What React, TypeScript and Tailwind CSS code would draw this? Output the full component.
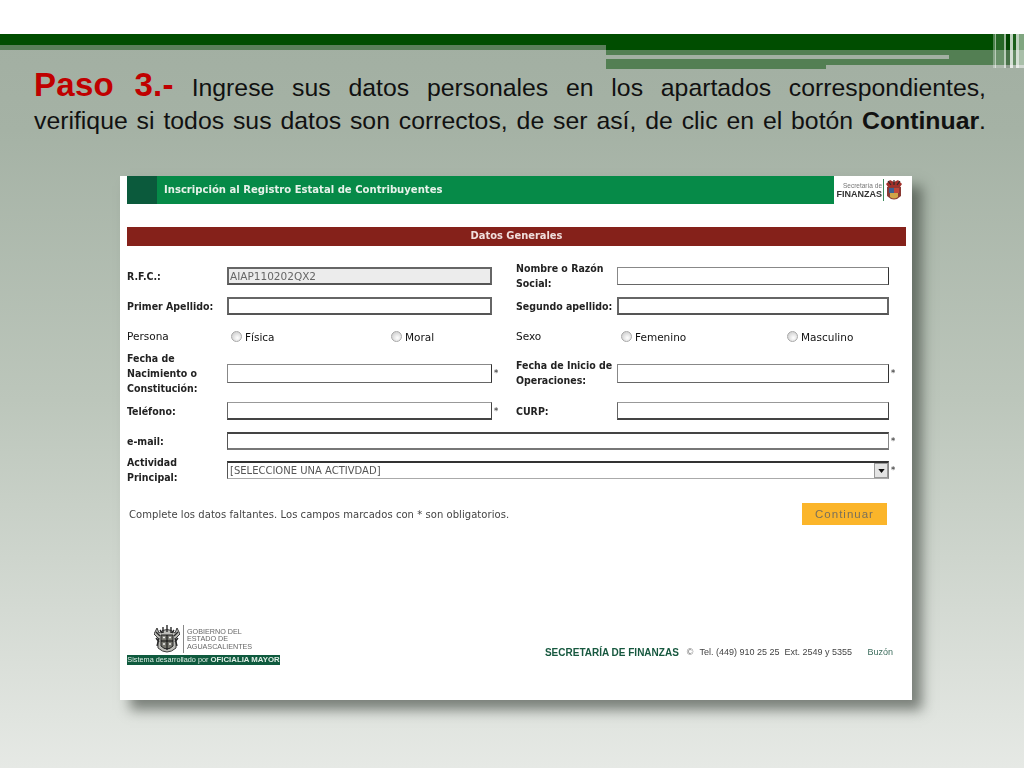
import React from "react";

const arial = { fontFamily: '"Liberation Sans", Arial, sans-serif' };
const dejavu = { fontFamily: '"DejaVu Sans", Verdana, sans-serif' };

function Coat({ className }: { className?: string }) {
  return (
    <svg viewBox="0 0 26 30" className={className}>
      <path d="M5 9 Q13 2 21 9 L23 4 L26 10 L22 14 L22 24 Q13 32 4 24 L4 14 L0 10 L3 4 Z" fill="#bdbdb8" stroke="#3a3a3a" strokeWidth="1" />
      <path d="M2 8 L6 12 M24 8 L20 12 M9 3 L9 9 M13 1 L13 8 M17 3 L17 9 M5 14 L3 22 M21 14 L23 22 M6 6 L8 9 M20 6 L18 9 M2 14 L5 18 M24 14 L21 18" stroke="#2a2a2a" strokeWidth="1.4" />
      <path d="M7 11 H19 V22 Q13 28 7 22 Z" fill="#77776f" stroke="#222" strokeWidth="1" />
      <path d="M13 11 V26 M7 17 H19" stroke="#111" strokeWidth="1" />
      <path d="M9 13.5 h2 M15 13.5 h2 M9 20 h2 M15 20 h2" stroke="#eee" strokeWidth="1.4" />
    </svg>
  );
}

function Crest() {
  return (
    <svg viewBox="0 0 18 22" className="h-[22px] w-[18px]">
      <path d="M1 5 L5 1 L9 3 L13 1 L17 5 L15 8 L3 8 Z" fill="#a1302a" />
      <path d="M3 2 L6 6 M15 2 L12 6 M9 1 V6" stroke="#2f2a2a" strokeWidth="1.2" />
      <path d="M2 8 H16 V17 Q9 24 2 17 Z" fill="#8a3a34" />
      <path d="M4 9 H9 V14 H4 Z" fill="#3a5f92" />
      <path d="M9 9 H14 V14 H9 Z" fill="#c0443a" />
      <path d="M5 14 H13 V18 Q9 21 5 18 Z" fill="#d0a548" />
    </svg>
  );
}

type Tone = "dark" | "light" | "mid" | "top";

function Field({ gray, tone = "dark", value, className }: { gray?: boolean; tone?: Tone; value?: string; className?: string }) {
  const border =
    tone === "light"
      ? "border border-t-[#888] border-l-[#888] border-r-[#333] border-b-[#666]"
      : tone === "mid"
        ? "border border-b-2 border-t-[#999] border-l-[#666] border-r-[#444] border-b-[#444]"
        : tone === "top"
          ? "border border-t-2 border-b-2 border-t-[#444] border-l-[#555] border-r-[#888] border-b-[#777]"
          : "border-2 border-t-[#666] border-l-[#666] border-r-[#666] border-b-[#555]";
  return (
    <div
      className={`flex items-center pl-[1px] text-[10.5px] font-normal text-[#666] ${border} ${gray ? "bg-[#ececec]" : "bg-white"} ${className ?? "h-[18px]"}`}
      style={dejavu}
    >
      {value}
    </div>
  );
}

function Radio({ label }: { label: string }) {
  return (
    <div className="flex items-center gap-[3px]">
      <span className="h-[11px] w-[11px] rounded-full border border-[#a8a8a8] bg-[radial-gradient(circle_at_60%_65%,#ffffff,#c4c4c4)]" />
      <span className="mt-[1px]">{label}</span>
    </div>
  );
}

function Star() {
  return <span className="pl-[2px] text-[9px] text-[#555]">*</span>;
}

export default function App() {
  return (
    <div className="h-[768px] w-[1024px] overflow-hidden bg-[linear-gradient(to_bottom,#ffffff_0px,#ffffff_34px,#a2afa2_34px,#a5b2a5_130px,#bcc6bb_400px,#e6e9e5_768px)]" style={arial}>
      {/* decorative header */}
      <div className="relative mt-[34px] flex h-[35px] w-[1024px]">
        <div className="w-[606px]">
          <div className="h-[11px] bg-[#004d00]" />
          <div className="h-[5px] bg-[#5a7f5a]" />
        </div>
        <div className="w-[418px]">
          <div className="h-[16px] bg-[#004d00]" />
          <div className="h-[15px] bg-[#537f53] pt-[5px]">
            <div className="h-[4px] w-[343px] bg-[#a3b0a3]" />
          </div>
          <div className="flex h-[4px]">
            <div className="h-full w-[220px] bg-[#537f53]" />
            <div className="h-[1px] w-[180px] bg-[#a3b0a3]" />
          </div>
        </div>
        <div className="absolute right-0 top-0 flex h-[34px] w-[31px]">
          <div className="w-[2px] bg-white/30" />
          <div className="w-[1px] bg-white/60" />
          <div className="w-[8px] bg-white/15" />
          <div className="w-[2px] bg-white/60" />
          <div className="w-[4px] bg-black/10" />
          <div className="w-[3px] bg-white/75" />
          <div className="w-[3px] bg-white/10" />
          <div className="w-[3px] bg-white/75" />
          <div className="w-[5px] bg-white/50" />
        </div>
      </div>

      {/* instruction text */}
      <div className="-mt-[1px] ml-[34px] w-[952px] text-[24.8px] text-[#111]">
        <div className="h-[36px] text-justify leading-[33px] [text-align-last:justify]">
          <span className="text-[33px] font-bold leading-[33px] tracking-[0.3px] text-[#c00000]">Paso 3.-</span>{" "}
          Ingrese sus datos personales en los apartados correspondientes,
        </div>
        <div className="h-[33px] text-justify leading-[33px] [text-align-last:justify]">
          verifique si todos sus datos son correctos, de ser así, de clic en el botón <b>Continuar</b>.
        </div>
      </div>

      {/* embedded page capture */}
      <div
        className="ml-[120px] mt-[39px] h-[524px] w-[792px] bg-white shadow-[10px_10px_12px_rgba(40,48,40,0.55)]"
        style={{ fontFamily: '"DejaVu Sans Condensed", "DejaVu Sans", Verdana, sans-serif' }}
      >
        <div className="flex h-full flex-col pl-[7px] pr-[6px] text-[10.5px] text-[#222] blur-[0.35px]">
          <div className="flex h-[28px]">
            <div className="w-[30px] bg-[#0b5a3c]" />
            <div className="flex flex-1 items-center bg-[#068a48] pl-[7px] text-[11.2px] font-bold text-[#e8f2ea]">
              Inscripción al Registro Estatal de Contribuyentes
            </div>
            <div className="flex w-[72px] items-center justify-end gap-[1px] pr-[3px]">
              <div className="text-right leading-[8px]">
                <div className="text-[6.5px] text-[#777]" style={arial}>Secretaría de</div>
                <div className="text-[9px] font-bold text-[#333]" style={arial}>FINANZAS</div>
              </div>
              <div className="h-[22px] w-[1px] bg-[#3c8a5c]" />
              <Crest />
            </div>
          </div>

          <div className="mt-[23px] flex h-[19px] items-center justify-center bg-[#85211a] text-[11px] font-bold text-[#f0dfdc]">
            Datos Generales
          </div>

          <div className="mt-[15px] grid grid-cols-[100px_265px_24px_101px_272px_1fr] grid-rows-[30px_30px_31px_42px_34px_26px_32px] items-center font-bold leading-[15px]">
            <div>R.F.C.:</div>
            <Field gray value="AIAP110202QX2" />
            <div />
            <div>Nombre o Razón Social:</div>
            <Field tone="light" />
            <div />

            <div>Primer Apellido:</div>
            <Field />
            <div />
            <div>Segundo apellido:</div>
            <Field />
            <div />

            <div className="font-normal text-[#111]" style={dejavu}>Persona</div>
            <div className="grid grid-cols-[160px_1fr] pl-[4px] font-normal text-[#111]" style={dejavu}>
              <Radio label="Física" />
              <Radio label="Moral" />
            </div>
            <div />
            <div className="font-normal text-[#111]" style={dejavu}>Sexo</div>
            <div className="grid grid-cols-[166px_1fr] pl-[4px] font-normal text-[#111]" style={dejavu}>
              <Radio label="Femenino" />
              <Radio label="Masculino" />
            </div>
            <div />

            <div>Fecha de Nacimiento o Constitución:</div>
            <Field tone="light" className="h-[19px]" />
            <Star />
            <div>Fecha de Inicio de Operaciones:</div>
            <Field tone="light" className="h-[19px]" />
            <Star />

            <div>Teléfono:</div>
            <Field tone="mid" />
            <Star />
            <div>CURP:</div>
            <Field tone="mid" />
            <div />

            <div>e-mail:</div>
            <div className="col-span-4">
              <Field tone="top" />
            </div>
            <Star />

            <div>Actividad Principal:</div>
            <div className="col-span-4 flex h-[18px] items-center justify-between border border-t-2 border-t-[#333] border-l-[#555] border-r-[#888] border-b-[#aaa] pl-[2px] font-normal text-[#555]">
              <span className="text-[10px]" style={dejavu}>[SELECCIONE UNA ACTIVDAD]</span>
              <span className="flex h-[15px] w-[14px] items-center justify-center border border-[#999] bg-[#e4e4e4]">
                <svg viewBox="0 0 8 5" className="h-[4px] w-[7px]">
                  <path d="M0 0 H8 L4 5 Z" fill="#111" />
                </svg>
              </span>
            </div>
            <Star />
          </div>

          <div className="mt-[17px] flex h-[22px] items-center justify-between pl-[2px] pr-[19px]">
            <span className="text-[10px] tracking-[0.05px] text-[#444]" style={dejavu}>Complete los datos faltantes. Los campos marcados con * son obligatorios.</span>
            <button className="h-[22px] w-[85px] bg-[#fbb52a] pt-[2px] text-[11.5px] tracking-[1px] text-[#7a705a]" style={arial}>
              Continuar
            </button>
          </div>

          <div className="mt-[98px] flex items-end justify-between pr-[13px]">
            <div className="w-[153px]">
              <div className="flex h-[32px] items-center pl-[27px]">
                <Coat className="h-[30px] w-[26px]" />
                <div className="mx-[3px] h-[28px] w-[1px] bg-[#888]" />
                <div className="text-[7.2px] leading-[7.5px] text-[#666]" style={arial}>
                  GOBIERNO DEL<br />ESTADO DE<br />AGUASCALIENTES
                </div>
              </div>
              <div className="flex h-[10px] items-center justify-center whitespace-nowrap bg-[#0f5a3e] text-[7.3px] text-[#dfeee6]" style={arial}>
                Sistema desarrollado por&nbsp;<b className="text-[7.8px]">OFICIALIA MAYOR</b>
              </div>
            </div>
            <div className="mb-[5px] flex items-center whitespace-nowrap text-[9px] text-[#444]" style={arial}>
              <b className="text-[10px] text-[#17583f]">SECRETARÍA DE FINANZAS</b>
              <span className="ml-[8px] text-[#666]">©</span>
              <span className="ml-[6px] w-[85px]">Tel. (449) 910 25 25</span>
              <span className="w-[83px]">Ext. 2549 y 5355</span>
              <span className="text-[#3d6d5d]">Buzón</span>
            </div>
          </div>
        </div>
      </div>
    </div>
  );
}
